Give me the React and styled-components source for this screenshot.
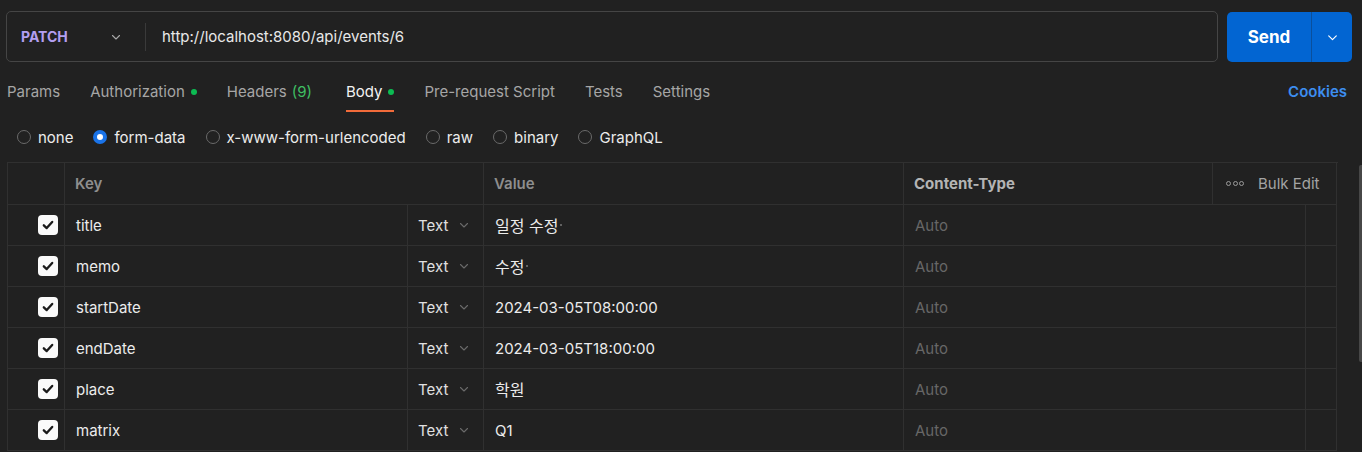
import React from "react";
import styled, { createGlobalStyle } from "styled-components";

const GlobalStyle = createGlobalStyle`
  body {
    margin: 0;
    background: #212121;
    font-family: Inter, "Noto Sans", "Noto Sans CJK KR", sans-serif;
    color: #e6e6e6;
  }
`;

const tabs = [
  { label: "Params" },
  { label: "Authorization", dot: true },
  { label: "Headers", count: "(9)" },
  { label: "Body", dot: true, active: true },
  { label: "Pre-request Script" },
  { label: "Tests" },
  { label: "Settings" },
];

const bodyTypes = ["none", "form-data", "x-www-form-urlencoded", "raw", "binary", "GraphQL"];

const rows = [
  { key: "title", value: "일정 수정", mark: true, cjk: true },
  { key: "memo", value: "수정", mark: true, cjk: true },
  { key: "startDate", value: "2024-03-05T08:00:00" },
  { key: "endDate", value: "2024-03-05T18:00:00" },
  { key: "place", value: "학원", cjk: true },
  { key: "matrix", value: "Q1" },
];

function Chevron({ color = "#9a9a9a", size = 12 }) {
  return (
    <svg width={size} height={size} viewBox="0 0 12 12" fill="none">
      <path d="M2.5 4.5L6 8L9.5 4.5" stroke={color} strokeWidth="1.1" strokeLinecap="round" strokeLinejoin="round" />
    </svg>
  );
}

export default function App() {
  return (
    <Page>
      <GlobalStyle />
      <TopBar>
        <UrlBox>
          <Method>
            PATCH
            <Chevron color="#a8a8a8" />
          </Method>
          <Divider />
          <Url>http://localhost:8080/api/events/6</Url>
        </UrlBox>
        <SendGroup>
          <SendLabel>Send</SendLabel>
          <SendArrow>
            <Chevron color="#ffffff" size={13} />
          </SendArrow>
        </SendGroup>
      </TopBar>

      <TabBar>
        <TabList>
          {tabs.map((t) => (
            <Tab key={t.label} $active={t.active}>
              {t.label}
              {t.count && <Count>{t.count}</Count>}
              {t.dot && <Dot />}
            </Tab>
          ))}
        </TabList>
        <Cookies>Cookies</Cookies>
      </TabBar>

      <RadioRow>
        {bodyTypes.map((b) => (
          <RadioItem key={b}>
            <Radio $checked={b === "form-data"} />
            {b}
          </RadioItem>
        ))}
      </RadioRow>

      <TableArea>
        <Table>
          <HeaderRow>
            <Cell />
            <HeadCell>Key</HeadCell>
            <HeadCell>Value</HeadCell>
            <HeadCell $light>Content-Type</HeadCell>
            <BulkCell>
              <Dots>
                <i />
                <i />
                <i />
              </Dots>
              Bulk Edit
            </BulkCell>
          </HeaderRow>
          {rows.map((r) => (
            <Row key={r.key}>
              <CheckCell>
                <Check>
                  <svg width="14" height="14" viewBox="0 0 14 14" fill="none">
                    <path d="M2.8 7.3L5.7 10.1L11.2 3.9" stroke="#1a1a1a" strokeWidth="2.3" strokeLinecap="round" strokeLinejoin="round" />
                  </svg>
                </Check>
              </CheckCell>
              <TextCell>{r.key}</TextCell>
              <TypeCell>
                Text
                <Chevron color="#6a6a6a" />
              </TypeCell>
              <TextCell $cjk={r.cjk}>
                {r.value}
                {r.mark && <Mark />}
              </TextCell>
              <TextCell $muted>Auto</TextCell>
              <Cell />
            </Row>
          ))}
        </Table>
        <Scrollbar />
      </TableArea>
    </Page>
  );
}

const Page = styled.div`
  width: 1362px;
  height: 452px;
  overflow: hidden;
  padding: 11px 10px 0 6px;
  box-sizing: border-box;
`;

const TopBar = styled.div`
  display: flex;
  gap: 9px;
  height: 51px;
`;

const UrlBox = styled.div`
  flex: 1;
  display: flex;
  align-items: center;
  border: 1px solid #454545;
  border-radius: 5px;
  box-sizing: border-box;
`;

const Method = styled.div`
  width: 138px;
  display: flex;
  align-items: center;
  justify-content: space-between;
  padding: 0 23px 0 14px;
  box-sizing: border-box;
  font-size: 14px;
  font-weight: 700;
  color: #b39ff0;
`;

const Divider = styled.div`
  width: 1px;
  height: 28px;
  background: #3a3a3a;
`;

const Url = styled.div`
  padding-left: 16px;
  font-size: 15px;
  color: #e8e8e8;
`;

const SendGroup = styled.div`
  display: flex;
  width: 125px;
  height: 50px;
  margin-top: 1px;
  background: #0265d2;
  border-radius: 5px;
  overflow: hidden;
`;

const SendLabel = styled.div`
  width: 84px;
  display: flex;
  align-items: center;
  justify-content: center;
  font-size: 17px;
  font-weight: 700;
  color: #fff;
  border-right: 1px solid #0a4f9c;
`;

const SendArrow = styled.div`
  flex: 1;
  display: flex;
  align-items: center;
  justify-content: center;
`;

const TabBar = styled.div`
  display: flex;
  justify-content: space-between;
  align-items: stretch;
  height: 41px;
  margin-top: 9px;
  padding-left: 1px;
  padding-right: 5px;
`;

const TabList = styled.div`
  display: flex;
  gap: 30px;
`;

const Tab = styled.div`
  display: flex;
  align-items: center;
  gap: 6px;
  font-size: 15px;
  color: ${(p) => (p.$active ? "#f2f2f2" : "#a6a6a6")};
  border-bottom: 2px solid ${(p) => (p.$active ? "#f26b3a" : "transparent")};
  box-sizing: border-box;
  padding-top: 2px;
`;

const Count = styled.span`
  color: #3fbf63;
  margin-left: -1px;
  margin-right: 4px;
`;

const Dot = styled.span`
  width: 6px;
  height: 6px;
  border-radius: 50%;
  background: #0cbb52;
`;

const Cookies = styled.div`
  display: flex;
  align-items: center;
  font-size: 15px;
  font-weight: 600;
  color: #3d8ef0;
`;

const RadioRow = styled.div`
  display: flex;
  align-items: center;
  gap: 20px;
  height: 26px;
  margin-top: 12px;
  padding-left: 11px;
`;

const RadioItem = styled.label`
  display: flex;
  align-items: center;
  gap: 7px;
  font-size: 15px;
  color: #ececec;
`;

const Radio = styled.span`
  width: 14px;
  height: 14px;
  border-radius: 50%;
  box-sizing: border-box;
  border: ${(p) => (p.$checked ? "4px solid #1a73e8" : "1px solid #6a6a6a")};
  background: ${(p) => (p.$checked ? "#fff" : "transparent")};
`;

const TableArea = styled.div`
  display: flex;
  justify-content: space-between;
  margin-top: 12px;
  margin-right: -10px;
`;

const Table = styled.div`
  width: 1330px;
  margin-left: 1px;
  border-top: 1px solid #303030;
  border-left: 1px solid #303030;
`;

const HeaderRow = styled.div`
  display: grid;
  grid-template-columns: 57px 419px 420px 309px 124px;
  height: 42px;
`;

const Row = styled.div`
  display: grid;
  grid-template-columns: 57px 343px 76px 420px 402px 31px;
  height: 41px;
`;

const Cell = styled.div`
  border-right: 1px solid #303030;
  border-bottom: 1px solid #303030;
  box-sizing: border-box;
`;

const HeadCell = styled(Cell)`
  display: flex;
  align-items: center;
  padding-left: 10px;
  font-size: 15px;
  font-weight: ${(p) => (p.$light ? 700 : 600)};
  color: ${(p) => (p.$light ? "#b4b4b4" : "#8e8e8e")};
`;

const BulkCell = styled(Cell)`
  display: flex;
  align-items: center;
  padding-left: 13px;
  gap: 14px;
  font-size: 15px;
  color: #a4a4a4;
`;

const Dots = styled.span`
  display: flex;
  gap: 1.5px;
  i {
    width: 3px;
    height: 3px;
    border-radius: 50%;
    border: 1px solid #9a9a9a;
  }
`;

const CheckCell = styled(Cell)`
  display: flex;
  align-items: center;
  justify-content: flex-end;
  padding-right: 6px;
`;

const Check = styled.span`
  width: 20px;
  height: 20px;
  border-radius: 4px;
  background: #fafafa;
  display: flex;
  align-items: center;
  justify-content: center;
`;

const TextCell = styled(Cell)`
  display: flex;
  align-items: center;
  padding-left: 11px;
  font-size: ${(p) => (p.$cjk ? "16px" : "15px")};
  color: ${(p) => (p.$muted ? "#676767" : "#ececec")};
`;

const TypeCell = styled(Cell)`
  display: flex;
  align-items: center;
  gap: 10px;
  padding-left: 10px;
  font-size: 15px;
  color: #e0e0e0;
`;

const Mark = styled.span`
  width: 2px;
  height: 2px;
  margin-left: 2px;
  background: #777;
  border-radius: 50%;
`;

const Scrollbar = styled.div`
  width: 3px;
  height: 197px;
  margin-top: 3px;
  background: #474747;
  border-radius: 2px 0 0 2px;
`;
